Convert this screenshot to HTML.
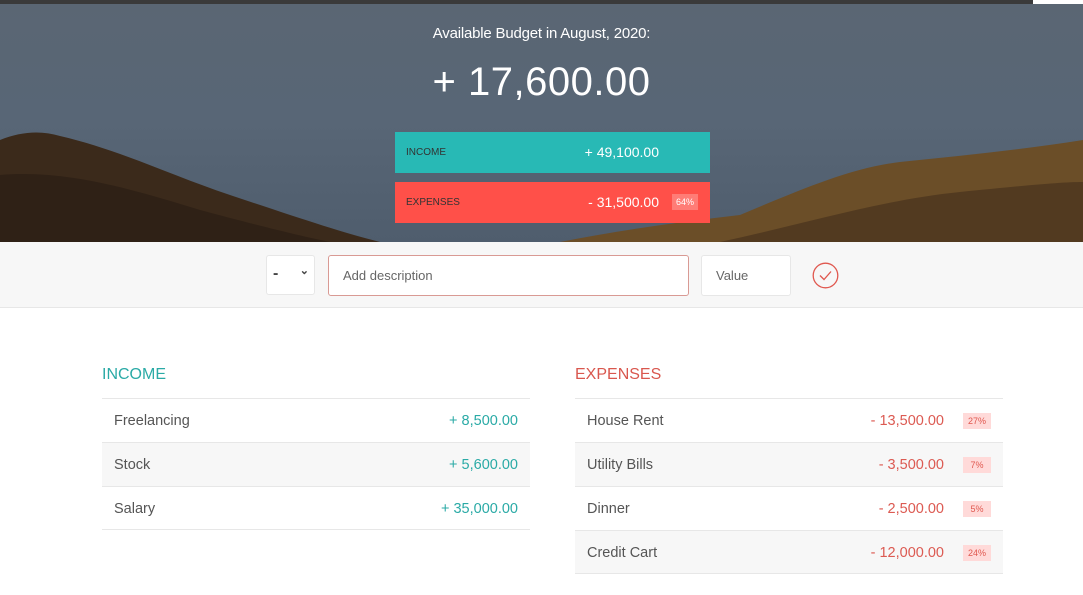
<!DOCTYPE html>
<html><head><style>
*{margin:0;padding:0;box-sizing:border-box}
body{width:1083px;height:595px;overflow:hidden;background:#fff;font-family:"Liberation Sans",sans-serif;color:#555}
.top{position:absolute;left:0;top:0;width:1083px;height:242px;background:linear-gradient(#5a6673,#586676 50%,#4f5d6d);overflow:hidden}
.bar{position:absolute;left:0;top:0;width:1083px;height:4px;background:#3a3a3a}
.t1{position:absolute;top:25px;width:1083px;text-align:center;color:#fff;font-size:15px;letter-spacing:-.2px}
.t2{position:absolute;top:60px;width:1083px;text-align:center;color:#fff;font-size:40px;font-weight:300;letter-spacing:.5px}
.box{position:absolute;left:395px;width:315px;height:41px;font-size:10px;color:#333}
.box .l{position:absolute;left:11px;top:15px}
.box .v{position:absolute;right:51px;top:12px;color:#fff;font-size:14px}
.box .p{position:absolute;right:12px;top:12px;background:rgba(255,255,255,.25);color:#fff;font-size:9px;padding:3px 4px}
.form{position:absolute;top:242px;left:0;width:1083px;height:66px;background:#f7f7f7;border-bottom:1px solid #e7e7e7}
.sel{position:absolute;left:266px;top:13px;width:49px;height:40px;background:#fff;border:1px solid #e7e7e7;font-size:16px;color:#444;padding:9px 6px;border-radius:3px;font-weight:bold}
.desc{position:absolute;left:328px;top:13px;width:361px;height:41px;background:#fff;border:1px solid #d99a94;border-radius:3px;font-size:13px;color:#666;padding:12px 14px}
.val{position:absolute;left:701px;top:13px;width:90px;height:41px;background:#fff;border:1px solid #e7e7e7;border-radius:3px;font-size:13px;color:#666;padding:12px 14px}
.chk{position:absolute;left:812px;top:20px}
.col{position:absolute;top:364px;width:428px}
.col h2{font-weight:normal;font-size:16px;height:34px;padding-top:2px}
.row{height:44px;border-top:1px solid #e7e7e7;position:relative;font-size:14.5px;color:#555}
.row .n{position:absolute;left:12px;top:14px}
.row .a{position:absolute;right:12px;top:14px}
.ex .row .a{right:59px;color:#dc5a52}
.in .row .a{color:#2aaaa6}
.row .b{position:absolute;right:12px;top:14px;background:#ffdad9;color:#e0584f;font-size:9px;padding:3px 4px;min-width:28px;text-align:center}
</style></head><body>
<div class="top">
<svg width="1083" height="242" style="position:absolute;left:0;top:0">
<path d="M0 140 C20 132 40 130 60 136 C120 150 170 175 230 195 C290 215 340 232 380 242 L0 242Z" fill="#3b2a1b"/>
<path d="M0 175 C60 170 120 185 200 210 C260 226 300 236 330 242 L0 242Z" fill="#2f2116"/>
<path d="M560 242 C620 230 680 222 740 215 C800 190 850 168 900 162 C960 156 1020 150 1083 140 L1083 242Z" fill="#6b4e28"/>
<path d="M720 242 C800 225 880 200 960 192 C1020 186 1060 182 1083 182 L1083 242Z" fill="#523a20"/>
</svg>
<div class="bar"></div>
<div style="position:absolute;right:0;top:0;width:50px;height:4px;background:#fff"></div>
<div class="t1">Available Budget in August, 2020:</div>
<div class="t2">+ 17,600.00</div>
<div class="box" style="top:132px;background:#28b9b5"><span class="l">INCOME</span><span class="v">+ 49,100.00</span></div>
<div class="box" style="top:182px;background:#ff5049"><span class="l">EXPENSES</span><span class="v">- 31,500.00</span><span class="p">64%</span></div>
</div>
<div class="form">
<div class="sel">-<span style="position:absolute;right:5px;top:8px;font-size:11px;font-weight:bold">&#8964;</span></div>
<div class="desc">Add description</div>
<div class="val">Value</div>
<svg class="chk" width="27" height="27" viewBox="0 0 27 27"><circle cx="13.5" cy="13.5" r="12.3" fill="none" stroke="#e0584f" stroke-width="1.3"/><path d="M8 13.5 L12 17.5 L19 9.5" fill="none" stroke="#e0584f" stroke-width="1.3"/></svg>
</div>
<div class="col in" style="left:102px"><h2 style="color:#2aaaa6">INCOME</h2>
<div class="row" style="background:#fff"><span class="n">Freelancing</span><span class="a">+ 8,500.00</span></div>
<div class="row" style="background:#f7f7f7"><span class="n">Stock</span><span class="a">+ 5,600.00</span></div>
<div class="row" style="background:#fff;border-bottom:1px solid #e7e7e7"><span class="n">Salary</span><span class="a">+ 35,000.00</span></div>
</div>
<div class="col ex" style="left:575px"><h2 style="color:#d9574e">EXPENSES</h2>
<div class="row" style="background:#fff"><span class="n">House Rent</span><span class="a">- 13,500.00</span><span class="b">27%</span></div>
<div class="row" style="background:#f7f7f7"><span class="n">Utility Bills</span><span class="a">- 3,500.00</span><span class="b">7%</span></div>
<div class="row" style="background:#fff"><span class="n">Dinner</span><span class="a">- 2,500.00</span><span class="b">5%</span></div>
<div class="row" style="background:#f7f7f7;border-bottom:1px solid #e7e7e7"><span class="n">Credit Cart</span><span class="a">- 12,000.00</span><span class="b">24%</span></div>
</div>
</body></html>
